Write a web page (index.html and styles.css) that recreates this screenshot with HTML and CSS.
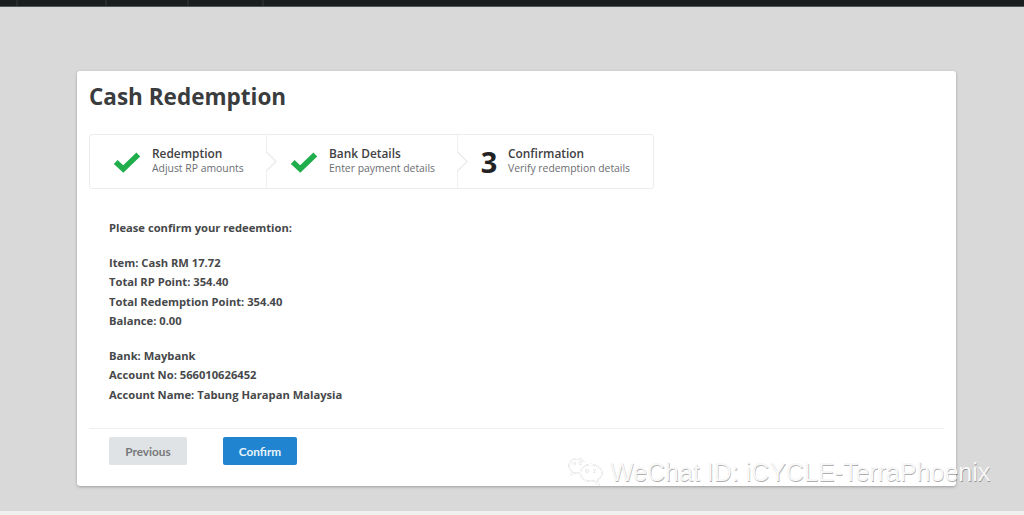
FILE: index.html
```html
<!DOCTYPE html>
<html lang="en">
<head>
<meta charset="utf-8">
<title>Cash Redemption</title>
<link rel="stylesheet" href="styles.css">
</head>
<body>
<header class="topbar">
  <span class="topbar-cell cell-a"></span>
  <span class="topbar-cell cell-b"></span>
  <span class="topbar-cell cell-c"></span>
  <span class="topbar-cell cell-d"></span>
</header>
<main class="stage">
  <section class="card">
    <h1 class="title">Cash Redemption</h1>
    <ol class="steps">
      <li class="step step-one">
        <svg class="check" viewBox="0 0 26 20" aria-hidden="true"><path d="M2.5 10 L9.5 16.5 L23.5 3" /></svg>
        <div class="step-text"><strong>Redemption</strong><span>Adjust RP amounts</span></div>
        <svg class="chevron" viewBox="0 0 12 54" aria-hidden="true"><path class="chevron-fill" d="M0 0 V17 L10 27 L0 37 V54 Z"/><path class="chevron-line" d="M0 0 V17 L10 27 L0 37 V54"/></svg>
      </li>
      <li class="step step-two">
        <svg class="check" viewBox="0 0 26 20" aria-hidden="true"><path d="M2.5 10 L9.5 16.5 L23.5 3" /></svg>
        <div class="step-text"><strong>Bank Details</strong><span>Enter payment details</span></div>
        <svg class="chevron" viewBox="0 0 12 54" aria-hidden="true"><path class="chevron-fill" d="M0 0 V17 L10 27 L0 37 V54 Z"/><path class="chevron-line" d="M0 0 V17 L10 27 L0 37 V54"/></svg>
      </li>
      <li class="step step-three">
        <span class="step-num">3</span>
        <div class="step-text"><strong>Confirmation</strong><span>Verify redemption details</span></div>
      </li>
    </ol>
    <div class="details">
      <p class="para">Please confirm your redeemtion:</p>
      <p class="para">Item: Cash RM 17.72<br>Total RP Point: 354.40<br>Total Redemption Point: 354.40<br>Balance: 0.00</p>
      <p class="para">Bank: Maybank<br>Account No: 566010626452<br>Account Name: Tabung Harapan Malaysia</p>
    </div>
    <div class="actions">
      <button class="btn btn-prev" type="button">Previous</button>
      <button class="btn btn-confirm" type="button">Confirm</button>
    </div>
  </section>
</main>
<footer class="bottom-strip"></footer>
<div class="watermark">
  <svg class="wm-icon" viewBox="0 0 38 30" aria-hidden="true">
    <path d="M17 4.5 C15 2 11.5 1 8.5 1.5 C4 2.2 1 5.5 1 9 C1 11.5 2.3 13.5 4.5 15 L3.5 18 L7 16.3 C8.5 16.8 10 17 11.5 16.9"/>
    <circle cx="6.5" cy="6.5" r="1.1"/>
    <circle cx="13" cy="6" r="1.1"/>
    <path d="M24 7.5 C17.8 7.5 13 11.6 13 16.5 C13 21.4 17.8 25.5 24 25.5 C25.3 25.5 26.6 25.3 27.8 25 L32.5 28.5 L31.5 23.5 C34.5 21.8 36 19.3 36 16.5 C36 11.6 30.2 7.5 24 7.5 Z"/>
    <circle cx="20" cy="14.5" r="1.1"/>
    <circle cx="28" cy="14.5" r="1.1"/>
  </svg>
  <span class="wm-text">WeChat ID: iCYCLE-TerraPhoenix</span>
</div>
</body>
</html>
```
FILE: styles.css
```css
* { box-sizing: border-box; }
html, body { height: 100%; }
body {
  margin: 0;
  height: 515px;
  overflow: hidden;
  display: flex;
  flex-direction: column;
  background: #d9d9d9;
  font-family: "Open Sans", "Liberation Sans", sans-serif;
  color: #3b3d3f;
  position: relative;
}
.topbar {
  height: 7px;
  flex: none;
  background: #1a1e1e;
  border-bottom: 1px solid #55585a;
  display: flex;
}
.topbar-cell { height: 6px; border-right: 2px solid #272b2b; }
.cell-a { width: 18px; }
.cell-b { width: 89px; }
.cell-c { width: 82px; }
.cell-d { width: 75px; }
.stage {
  flex: 1;
  padding: 64px 68px 25px 77px;
}
.card {
  height: 415px;
  background: #fff;
  border-radius: 3px;
  box-shadow: 0 1px 3px rgba(0, 0, 0, .28);
  padding: 11px 12px 0;
}
.title {
  margin: 0;
  font-size: 22.5px;
  line-height: 30px;
  font-weight: 700;
  color: #3a3c3e;
}
.steps {
  list-style: none;
  margin: 22px 0 0;
  padding: 0;
  display: flex;
  width: 565px;
  height: 55px;
  border: 1px solid #ececec;
  border-radius: 3px;
}
.step {
  position: relative;
  display: flex;
  align-items: center;
  height: 100%;
}
.step-one { width: 176px; padding-left: 23px; }
.step-two { width: 191px; padding-left: 24px; }
.step-three { flex: 1; padding-left: 23px; }
.check {
  width: 28px;
  height: 22px;
  flex: none;
  margin-right: 11px;
}
.check path {
  fill: none;
  stroke: #1fae4b;
  stroke-width: 5;
}
.step-num {
  width: 18px;
  margin-right: 10px;
  font-size: 29px;
  font-weight: 700;
  line-height: 1;
  color: #222;
  text-align: center;
}
.step-text { display: flex; flex-direction: column; margin-top: -2px; }
.step-text strong {
  font-size: 11.9px;
  line-height: 15px;
  font-weight: 600;
  color: #3f4143;
  white-space: nowrap;
}
.step-text span {
  font-size: 10.4px;
  line-height: 15px;
  color: #6b6e71;
  white-space: nowrap;
}
.chevron {
  position: absolute;
  top: -1px;
  right: -12px;
  width: 12px;
  height: 55px;
  z-index: 1;
}
.chevron-fill { fill: #fff; }
.chevron-line { fill: none; stroke: #ececec; stroke-width: 1.5; }
.details {
  padding: 29px 20px 0;
  font-size: 11.2px;
  line-height: 19.5px;
  font-weight: 700;
  color: #46484a;
}
.para { margin: 0 0 15px; }
.actions {
  margin-top: 24px;
  padding: 8px 20px 0;
  border-top: 1px solid #f0f0f0;
  display: flex;
  gap: 36px;
}
.btn {
  height: 28px;
  border: 0;
  border-radius: 2px;
  font-family: Lato, "Liberation Sans", sans-serif;
  font-size: 11.8px;
  font-weight: 700;
  padding: 0;
}
.btn-prev { width: 78px; background: #e0e3e5; color: #76797b; }
.btn-confirm { width: 74px; background: #2184d0; color: #e8f4fc; }
.bottom-strip {
  height: 4px;
  flex: none;
  background: #f0f0f0;
}
.watermark {
  position: absolute;
  left: 568px;
  top: 457px;
  display: flex;
  align-items: center;
  gap: 6px;
  pointer-events: none;
}
.wm-icon {
  width: 36px;
  height: 29px;
  fill: none;
  stroke: #fff;
  stroke-width: 1.3;
  filter: drop-shadow(.5px .7px 0 rgba(0, 0, 0, .35));
}
.wm-text {
  font-family: "Liberation Sans", Arial, sans-serif;
  font-size: 25px;
  line-height: 28px;
  white-space: nowrap;
  color: #f7f7f7;
  text-shadow: .6px .8px 0 rgba(0, 0, 0, .32);
}
```
